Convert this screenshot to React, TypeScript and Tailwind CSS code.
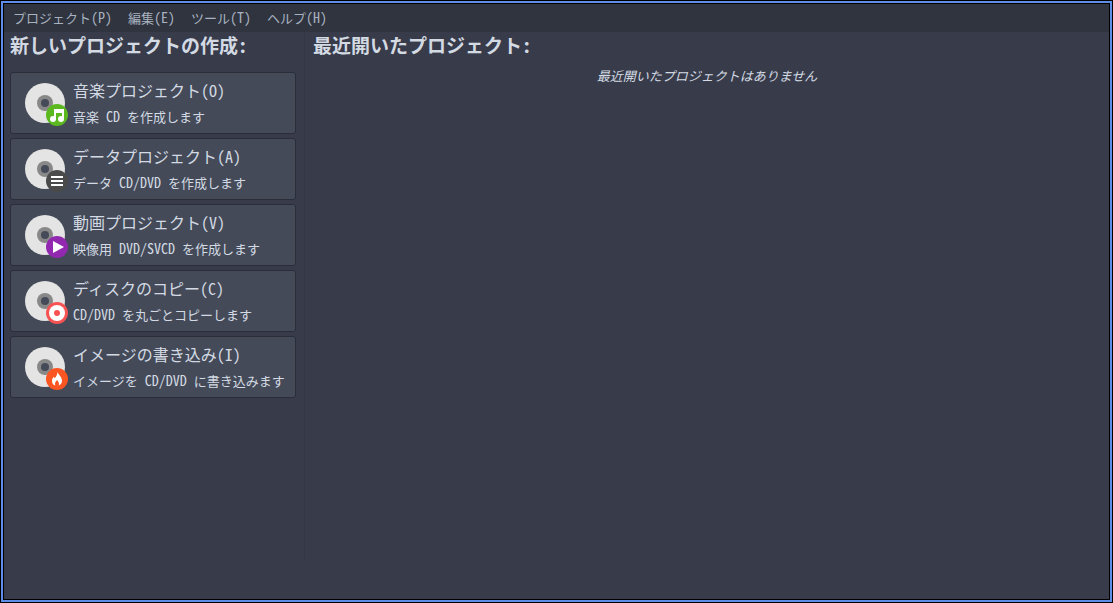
import React from "react";

const menus = ["プロジェクト(P)", "編集(E)", "ツール(T)", "ヘルプ(H)"];

interface Project {
  title: string;
  description: string;
  badge: React.ReactNode;
}

// Badges are drawn on the 48x48 disc icon, centred on (36, 36)
const projects: Project[] = [
  {
    title: "音楽プロジェクト(O)",
    description: "音楽 CD を作成します",
    badge: (
      <>
        <circle cx="36" cy="36" r="11" fill="#5bb81f" />
        <g fill="#fff">
          <path d="M33 30h10v10h-2v-6h-6v6h-2z" />
          <circle cx="32" cy="40" r="3" />
          <circle cx="40" cy="40" r="3" />
        </g>
      </>
    ),
  },
  {
    title: "データプロジェクト(A)",
    description: "データ CD/DVD を作成します",
    badge: (
      <>
        <circle cx="36" cy="36" r="11" fill="#4a4a4a" />
        <path d="M30 31h12v2H30zM30 35h12v2H30zM30 39h12v2H30z" fill="#fff" />
      </>
    ),
  },
  {
    title: "動画プロジェクト(V)",
    description: "映像用 DVD/SVCD を作成します",
    badge: (
      <>
        <circle cx="36" cy="36" r="11" fill="#9328b0" />
        <path d="M32 30v12l11-6z" fill="#fff" />
      </>
    ),
  },
  {
    title: "ディスクのコピー(C)",
    description: "CD/DVD を丸ごとコピーします",
    badge: (
      <>
        <circle cx="36" cy="36" r="11" fill="#f85353" />
        <circle cx="36" cy="36" r="8" fill="#fff" />
        <circle cx="36" cy="36" r="3" fill="#f85353" />
      </>
    ),
  },
  {
    title: "イメージの書き込み(I)",
    description: "イメージを CD/DVD に書き込みます",
    badge: (
      <>
        <circle cx="36" cy="36" r="11" fill="#fb5622" />
        <path
          d="M36.500 29c.6 2.600 4.500 4.500 4.500 8.700 0 2.400-1.300 4.100-3.300 4.800.7-1.900.2-3.300-1.700-5.500-1.900 2.200-2.400 3.600-1.700 5.500-2-.7-3.300-2.300-3.300-4.600 0-1.700.8-2.900 1.800-4.100l.9 1.500c1.600-1.700 2.600-3.800 2.800-6.300z"
          fill="#fff"
        />
      </>
    ),
  },
];

// Small text: half-width latin is set one size up next to the kana and kanji
const SmallText: React.FC<{ text: string }> = ({ text }) => (
  <>
    {text.split(/([ -~]+)/).map((part, i) =>
      i % 2 ? (
        <span key={i} className="text-[14px] leading-none">
          {part}
        </span>
      ) : (
        part
      )
    )}
  </>
);

const DiscIcon: React.FC<{ children: React.ReactNode }> = ({ children }) => (
  <svg viewBox="0 0 48 48" className="size-12 shrink-0" aria-hidden="true">
    <circle cx="24" cy="24" r="20" fill="#e4e4e4" />
    <circle cx="24" cy="24" r="8" fill="#888" />
    <circle cx="24" cy="24" r="4" fill="#444a58" />
    {children}
  </svg>
);

const ProjectButton: React.FC<Project> = ({ title, description, badge }) => (
  <button
    type="button"
    className="flex w-full items-center gap-1 rounded-[3px] border border-[#2b2e39] bg-[#444a58] px-2.5 py-[6px] text-left hover:bg-[#505666]"
  >
    <DiscIcon>{badge}</DiscIcon>
    <span className="flex flex-col gap-1.5 whitespace-nowrap">
      <span className="text-[16px] leading-[22px]">{title}</span>
      <span className="text-[13px] leading-5">
        <SmallText text={description} />
      </span>
    </span>
  </button>
);

export default function App() {
  return (
    <div className="min-h-screen bg-[#5f8ee8] border border-black p-[2px] flex font-['Noto_Sans_CJK_JP',sans-serif] [font-feature-settings:'hwid'] text-[#d3dae3]">
      <div className="flex flex-1 flex-col border border-black bg-[#383c4a]">
        <nav className="flex h-7 items-center gap-0.5 bg-[#2f343f] px-0.5 text-[13px] text-[#a9b2c0]">
          {menus.map((menu) => (
            <button key={menu} type="button" className="px-[7px] leading-5">
              <SmallText text={menu} />
            </button>
          ))}
        </nav>

        <main className="flex flex-1 pb-10">
          <section className="w-[301px] shrink-0 border-r border-[#333745] pl-1.5 pr-2">
            <h2 className="mb-3.5 text-[19px] font-bold leading-[26px]">
              新しいプロジェクトの作成:
            </h2>
            <div className="flex flex-col gap-1">
              {projects.map((project) => (
                <ProjectButton key={project.title} {...project} />
              ))}
            </div>
          </section>

          <section className="flex-1 px-2">
            <h2 className="text-[19px] font-bold leading-[26px]">
              最近開いたプロジェクト:
            </h2>
            <p className="mt-2 text-center text-[13px] italic leading-5">
              最近開いたプロジェクトはありません
            </p>
          </section>
        </main>
      </div>
    </div>
  );
}
